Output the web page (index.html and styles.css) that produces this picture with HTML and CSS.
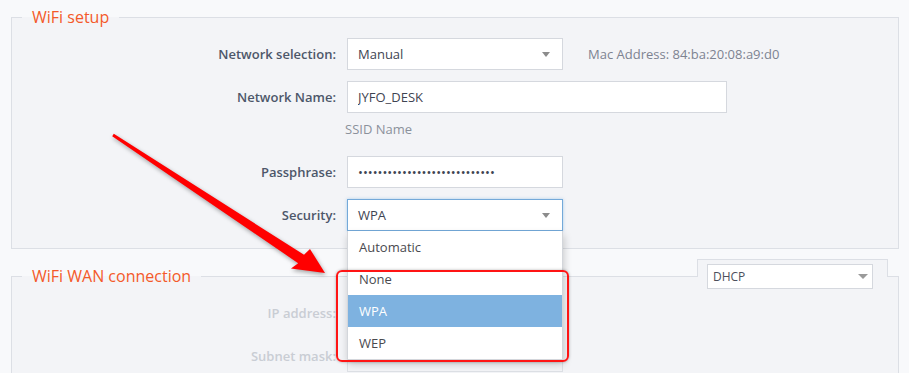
FILE: index.html
```html
<!DOCTYPE html>
<html lang="en">
<head>
    <meta charset="UTF-8">
    <title>WiFi setup</title>
    <link rel="stylesheet" href="styles.css">
</head>
<body>
    <fieldset class="panel">
        <legend>WiFi setup</legend>

        <div class="row">
            <label>Network selection:</label>
            <div class="select"><span>Manual</span></div>
            <span class="note">Mac Address: 84:ba:20:08:a9:d0</span>
        </div>

        <div class="row">
            <label>Network Name:</label>
            <input class="field wide" type="text" value="JYFO_DESK">
        </div>
        <div class="help">SSID Name</div>

        <div class="row">
            <label>Passphrase:</label>
            <input class="field" type="password" value="abcdefghijklmnopqrstuvwxyzab">
        </div>

        <div class="row">
            <label>Security:</label>
            <div class="select-wrap">
                <div class="select focus"><span>WPA</span></div>
                <ul class="menu">
                    <li>Automatic</li>
                    <li>None</li>
                    <li class="active">WPA</li>
                    <li>WEP</li>
                </ul>
            </div>
        </div>
    </fieldset>

    <section class="group">
        <fieldset class="panel disabled">
            <legend>WiFi WAN connection</legend>

            <div class="row">
                <label>IP address:</label>
                <input class="field" type="text" disabled>
            </div>

            <div class="row">
                <label>Subnet mask:</label>
                <input class="field" type="text" disabled>
            </div>
        </fieldset>

        <div class="tab">
            <div class="select sm"><span>DHCP</span></div>
        </div>
    </section>

    <!-- annotation drawn over the screenshot -->
    <div class="callout"></div>
    <svg class="arrow" width="909" height="373" viewBox="0 0 909 373">
        <polygon points="113.8,133.8 304,254.8 310,249 325,273 291,268.5 298.2,263.2 112.2,136.2" fill="#ff0000"/>
    </svg>
</body>
</html>
```

FILE: styles.css
```css
* {
    box-sizing: border-box;
}

body {
    margin: 0;
    background: #f8f9fb;
    font-family: "Open Sans", "Noto Sans", sans-serif;
    font-size: 13px;
    color: #3e4452;
    overflow: hidden;
}

.panel {
    margin: 5px 0 0 11px;
    width: 888px;
    min-width: 0;
    padding: 9px 0 17px 10px;
    border: 1px solid #dcdfe5;
    background: #f3f4f7;
}

.panel legend {
    padding: 0 10px;
    font-size: 16px;
    line-height: 24px;
    color: #f45a2a;
}

.row {
    display: flex;
    align-items: center;
    height: 32px;
}

.row + .row {
    margin-top: 11px;
}

.row label {
    width: 314px;
    margin-right: 11px;
    text-align: right;
    font-weight: 600;
    color: #4d576a;
}

.field {
    width: 216px;
    height: 32px;
    padding: 0 10px;
    border: 1px solid #d5d8de;
    background: #ffffff;
    font-family: inherit;
    font-size: 13px;
    color: #3e4452;
    outline: none;
}

.field.wide {
    width: 380px;
}

.help {
    margin: 7px 0 18px 323px;
    line-height: 18px;
    color: #8b919b;
}

.note {
    margin-left: 25px;
    color: #7d8391;
}

.select {
    display: flex;
    align-items: center;
    justify-content: space-between;
    width: 216px;
    height: 32px;
    padding: 0 12px 0 10px;
    border: 1px solid #d5d8de;
    background: #ffffff;
}

.select::after {
    content: '';
    border-left: 4.5px solid transparent;
    border-right: 4.5px solid transparent;
    border-top: 5px solid #8c8c8c;
}

.select.focus {
    border-color: #74a9d9;
    box-shadow: 0 0 3px rgba(102, 168, 225, 0.5);
}

.select.sm {
    width: 166px;
    height: 25px;
    padding: 0 4px 0 5px;
    font-size: 12px;
    color: #4d4f5c;
}

.select.sm::after {
    border-left-width: 5px;
    border-right-width: 5px;
    border-top-color: #9a9a9a;
}

.select-wrap {
    position: relative;
}

.menu {
    position: absolute;
    top: 100%;
    left: 0;
    z-index: 2;
    width: 216px;
    margin: 0;
    padding: 0;
    list-style: none;
    background: #ffffff;
    border: 1px solid #d3d6db;
    border-top: none;
    box-shadow: 1px 4px 8px rgba(0, 0, 0, 0.2);
}

.menu li {
    height: 32px;
    line-height: 32px;
    padding-left: 11px;
    color: #4a4a4f;
}

.menu li.active {
    background: #7eb2e0;
    color: #ffffff;
}

.group {
    position: relative;
    margin-top: 15px;
}

.group .panel {
    margin-top: 0;
}

.disabled .row label {
    color: #c9cdd4;
}

.disabled .field {
    background: #f3f4f7;
    border-color: #dde0e5;
}

.tab {
    position: absolute;
    top: -5px;
    left: 697px;
    width: 191px;
    height: 18px;
    padding: 4px 0 0 9px;
    border: 1px solid #dcdfe5;
    border-bottom: none;
    background: #f3f4f7;
}

.callout {
    position: absolute;
    left: 336px;
    top: 270px;
    z-index: 3;
    width: 233px;
    height: 92px;
    border: 2px solid #ff1414;
    border-radius: 6px;
    box-shadow: 0 0 3px rgba(0, 0, 0, 0.3);
}

.arrow {
    position: absolute;
    left: 0;
    top: 0;
    z-index: 4;
    pointer-events: none;
    filter: drop-shadow(1px 2px 2px rgba(0, 0, 0, 0.35));
}
```
